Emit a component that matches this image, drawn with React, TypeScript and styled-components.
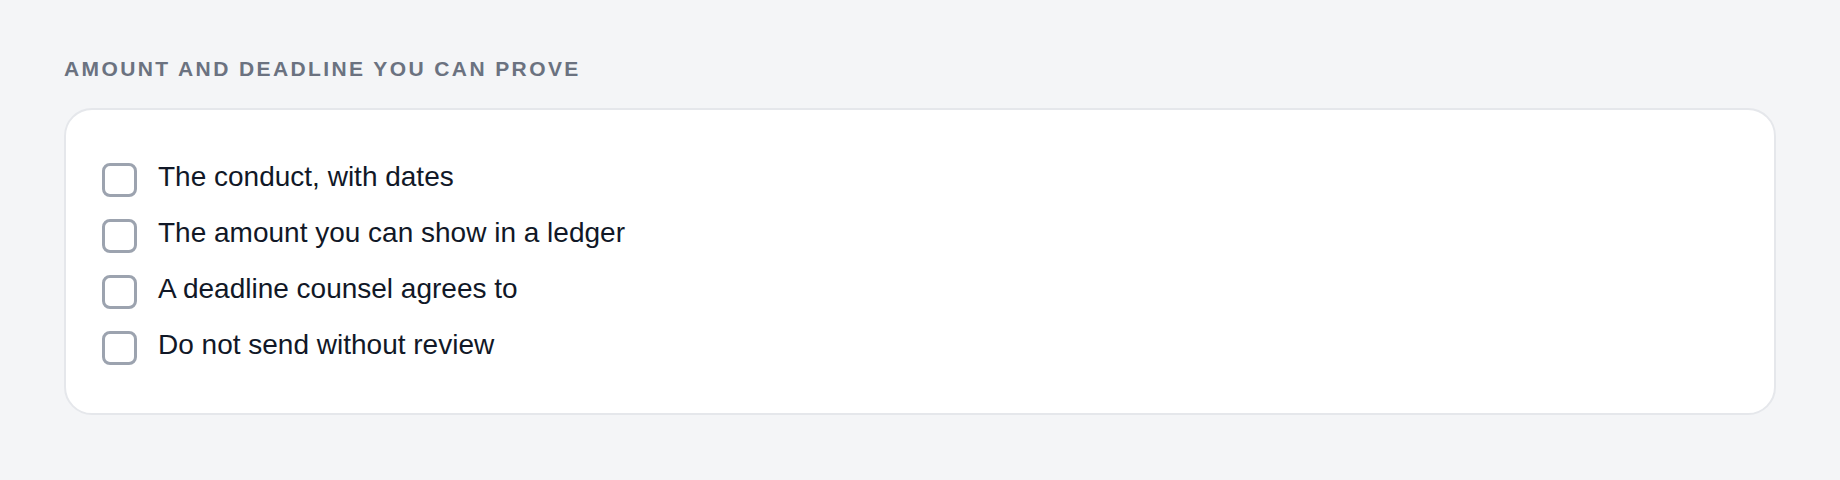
import * as React from 'react';
import styled, { createGlobalStyle } from 'styled-components';

const items = [
  'The conduct, with dates',
  'The amount you can show in a ledger',
  'A deadline counsel agrees to',
  'Do not send without review',
];

const App: React.FC<{}> = () => {
  const [checked, setChecked] = React.useState<boolean[]>(items.map(() => false));

  const toggle = (i: number) =>
    setChecked((prev) => prev.map((v, j) => (j === i ? !v : v)));

  return (
    <>
      <GlobalStyle />
      <Page>
        <SectionTitle>Amount and deadline you can prove</SectionTitle>
        <Card>
          <List>
            {items.map((text, i) => (
              <Row key={text}>
                <Box type="checkbox" checked={checked[i]} onChange={() => toggle(i)} />
                <RowText>{text}</RowText>
              </Row>
            ))}
          </List>
        </Card>
      </Page>
    </>
  );
};

const GlobalStyle = createGlobalStyle`
  html, body {
    margin: 0;
    padding: 0;
    background: #f4f5f7;
  }
  body {
    font-family: "Liberation Sans", Arial, Helvetica, sans-serif;
  }
`;

const Page = styled.div`
  min-height: 480px;
  box-sizing: border-box;
  padding: 57px 64px 40px;
  background: #f4f5f7;
`;

const SectionTitle = styled.h2`
  margin: 0 0 27px;
  font-size: 21px;
  line-height: 24px;
  font-weight: 700;
  letter-spacing: 2.4px;
  text-transform: uppercase;
  color: #6b7280;
`;

const Card = styled.div`
  box-sizing: border-box;
  background: #ffffff;
  border: 2px solid #e5e7eb;
  border-radius: 28px;
  padding: 46px 36px 47px;
`;

const List = styled.div`
  display: flex;
  flex-direction: column;
  gap: 14px;
`;

const Row = styled.label`
  display: flex;
  align-items: flex-start;
  gap: 21px;
  cursor: pointer;
`;

const Box = styled.input`
  appearance: none;
  flex: none;
  box-sizing: border-box;
  width: 35px;
  height: 34px;
  margin: 7px 0 0;
  border: 3px solid #9ca3af;
  border-radius: 8px;
  background: #ffffff;
  cursor: pointer;

  &:checked {
    background: #111827;
    border-color: #111827;
  }
`;

const RowText = styled.span`
  font-size: 28px;
  line-height: 42px;
  color: #111827;
`;

export default App;
